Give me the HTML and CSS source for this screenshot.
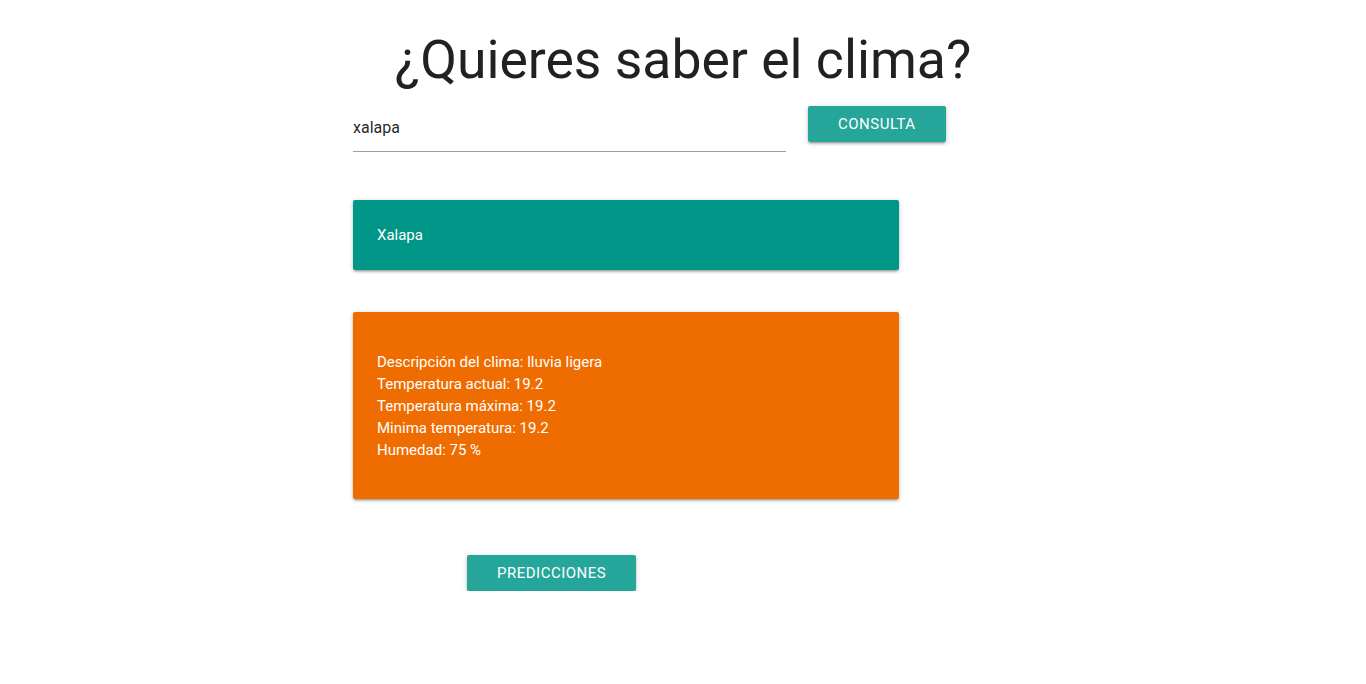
FILE: index.html
```html
<!DOCTYPE html>
<html lang="es">
<head>
<meta charset="utf-8">
<title>Clima</title>
<link rel="stylesheet" href="styles.css">
</head>
<body>
  <h1 class="title">¿Quieres saber el clima?</h1>
  <main class="column">
    <form class="search">
      <input class="search-input" type="text" value="xalapa">
      <button class="btn" type="button">Consulta</button>
    </form>
    <section class="card card-teal">
      <p class="city">Xalapa</p>
    </section>
    <section class="card card-orange">
      <p>Descripción del clima: lluvia ligera</p>
      <p>Temperatura actual: 19.2</p>
      <p>Temperatura máxima: 19.2</p>
      <p>Minima temperatura: 19.2</p>
      <p>Humedad: 75 %</p>
    </section>
    <div class="actions">
      <button class="btn" type="button">Predicciones</button>
    </div>
  </main>
</body>
</html>
```
FILE: styles.css
```css
* { box-sizing: border-box; }

body {
  margin: 0;
  font-family: Roboto, "Liberation Sans", sans-serif;
  color: rgba(0, 0, 0, 0.87);
  background: #fff;
}

.title {
  margin: 30px 0 0;
  text-align: center;
  font-size: 53.5px;
  font-weight: 400;
  line-height: 60px;
  color: #212121;
}

.column {
  width: 660px;
  margin: 0 auto;
}

.search {
  display: flex;
  align-items: flex-start;
  gap: 22px;
  margin-top: 14px;
}

.search-input {
  width: 433px;
  height: 48px;
  margin: 0;
  padding: 0;
  border: none;
  border-bottom: 1px solid #9e9e9e;
  outline: none;
  font-family: inherit;
  font-size: 16px;
  color: rgba(0, 0, 0, 0.87);
  background: transparent;
}

.btn {
  height: 36px;
  padding: 0 30px;
  margin-top: 2px;
  border: none;
  border-radius: 2px;
  background: #26a69a;
  color: #fff;
  font-family: inherit;
  font-size: 15px;
  letter-spacing: 0.5px;
  text-transform: uppercase;
  box-shadow: 0 2px 2px 0 rgba(0,0,0,.14), 0 3px 1px -2px rgba(0,0,0,.12), 0 1px 5px 0 rgba(0,0,0,.2);
}

.card {
  width: 546px;
  border-radius: 2px;
  color: #fff;
  font-size: 15px;
  line-height: 22px;
  box-shadow: 0 2px 2px 0 rgba(0,0,0,.14), 0 3px 1px -2px rgba(0,0,0,.12), 0 1px 5px 0 rgba(0,0,0,.2);
}

.card p { margin: 0; }

.card-teal {
  margin-top: 48px;
  padding: 24px;
  background: #009688;
}

.card-orange {
  margin-top: 42px;
  padding: 39px 24px 38px;
  background: #ef6c00;
}

.actions {
  margin-top: 56px;
  padding-left: 114px;
}

.actions .btn { margin-top: 0; }
```
